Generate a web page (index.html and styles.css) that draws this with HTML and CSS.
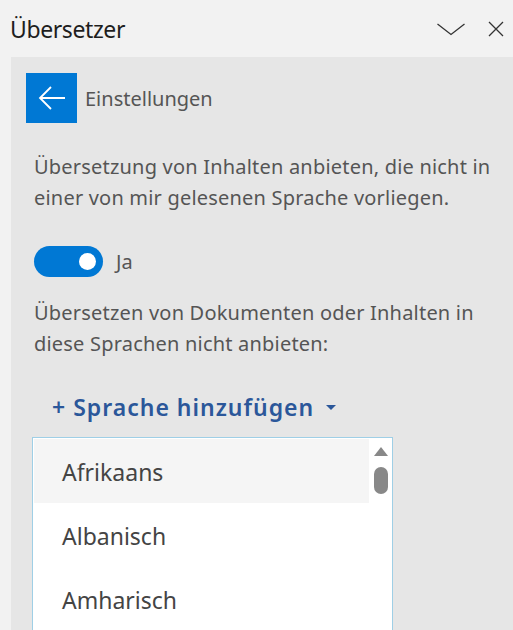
FILE: index.html
```html
<!DOCTYPE html>
<html lang="de">
<head>
<meta charset="utf-8">
<link rel="stylesheet" href="styles.css">
</head>
<body>
<div class="pane">
  <header class="header">
    <h1 class="title">Übersetzer</h1>
    <div class="header-icons">
      <svg class="icon" width="30" height="14" viewBox="0 0 30 14"><path d="M1.5 2 L15 12.5 L28.5 2" fill="none" stroke="#333" stroke-width="1.3"/></svg>
      <svg class="icon" width="16" height="16" viewBox="0 0 16 16"><path d="M1 1 L15 15 M15 1 L1 15" fill="none" stroke="#333" stroke-width="1.3"/></svg>
    </div>
  </header>
  <main class="panel">
    <div class="back-row">
      <div class="back-btn">
        <svg width="28" height="26" viewBox="0 0 28 26"><path d="M2 13 H27 M13 2 L2 13 L13 24" fill="none" stroke="#fff" stroke-width="1.8"/></svg>
      </div>
      <span class="back-label">Einstellungen</span>
    </div>
    <p class="text para1">Übersetzung von Inhalten anbieten, die nicht in einer von mir gelesenen Sprache vorliegen.</p>
    <div class="toggle-row">
      <div class="toggle"><div class="knob"></div></div>
      <span class="toggle-label">Ja</span>
    </div>
    <p class="text para2">Übersetzen von Dokumenten oder Inhalten in diese Sprachen nicht anbieten:</p>
    <div class="add-lang">+ Sprache hinzufügen <span class="caret"></span></div>
    <div class="listbox">
      <ul class="items">
        <li class="item selected">Afrikaans</li>
        <li class="item">Albanisch</li>
        <li class="item">Amharisch</li>
      </ul>
      <div class="scrollbar">
        <div class="sb-up"></div>
        <div class="sb-thumb"></div>
      </div>
    </div>
  </main>
</div>
</body>
</html>
```
FILE: styles.css
```css
* { box-sizing: border-box; }
html, body { margin: 0; padding: 0; }
body {
  width: 513px;
  height: 630px;
  overflow: hidden;
  background: #f2f2f2;
  font-family: "Noto Sans", "Open Sans", sans-serif;
  color: #444;
}
.pane { display: flex; flex-direction: column; height: 630px; }
.header {
  height: 57px;
  display: flex;
  align-items: center;
  justify-content: space-between;
  padding: 0 9px 0 10px;
}
.title {
  margin: 0;
  font-size: 23px;
  font-weight: 400;
  color: #1e1e1e;
  letter-spacing: -0.4px;
}
.header-icons { display: flex; align-items: center; gap: 22px; }
.icon { display: block; }
.panel {
  flex: 1;
  margin-left: 11px;
  background: #e6e6e6;
  padding: 16px 0 0 15px;
  overflow: hidden;
}
.back-row { display: flex; align-items: center; gap: 8px; }
.back-btn {
  width: 51px; height: 50px;
  background: #0078d4;
  display: flex; align-items: center; justify-content: center;
}
.back-btn svg { display: block; }
.back-label { font-size: 20px; color: #555; }
.text {
  margin: 0 0 0 8px;
  font-size: 20px;
  line-height: 31px;
  color: #555;
  width: 468px;
  letter-spacing: 0.2px;
}
.para1 { margin-top: 28px; }
.toggle-row { display: flex; align-items: center; gap: 13px; margin: 33px 0 0 8px; }
.toggle {
  width: 69px; height: 31px;
  border-radius: 16px;
  background: #0078d4;
  position: relative;
}
.knob {
  position: absolute;
  width: 17px; height: 17px;
  border-radius: 50%;
  background: #fff;
  top: 7px; right: 7px;
}
.toggle-label { font-size: 20px; color: #555; }
.para2 { margin-top: 20px; }
.add-lang {
  margin: 33px 0 0 26px;
  font-size: 23px;
  line-height: 30px;
  font-weight: 600;
  color: #2b579a;
  display: flex;
  align-items: center;
  letter-spacing: 1px;
}
.caret {
  display: inline-block;
  margin-left: 12px;
  width: 0; height: 0;
  border-left: 5px solid transparent;
  border-right: 5px solid transparent;
  border-top: 5px solid #2b579a;
}
.listbox {
  margin: 15px 0 0 6px;
  width: 361px;
  height: 200px;
  background: #fff;
  border: 1px solid #9fcfe6;
  border-bottom: none;
  display: flex;
  padding: 1px 0 0 1px;
}
.items { list-style: none; margin: 0; padding: 0; flex: 1; }
.item {
  height: 64px;
  line-height: 62px;
  padding: 2px 0 0 28px;
  font-size: 23px;
  color: #444;
}
.item.selected { background: #f5f5f5; }
.scrollbar { width: 23px; display: flex; flex-direction: column; align-items: center; padding-top: 8px; }
.sb-up {
  width: 0; height: 0;
  border-left: 7px solid transparent;
  border-right: 7px solid transparent;
  border-bottom: 9px solid #888;
}
.sb-thumb {
  margin-top: 11px;
  width: 14px; height: 27px;
  border-radius: 7px;
  background: #888;
}
```
